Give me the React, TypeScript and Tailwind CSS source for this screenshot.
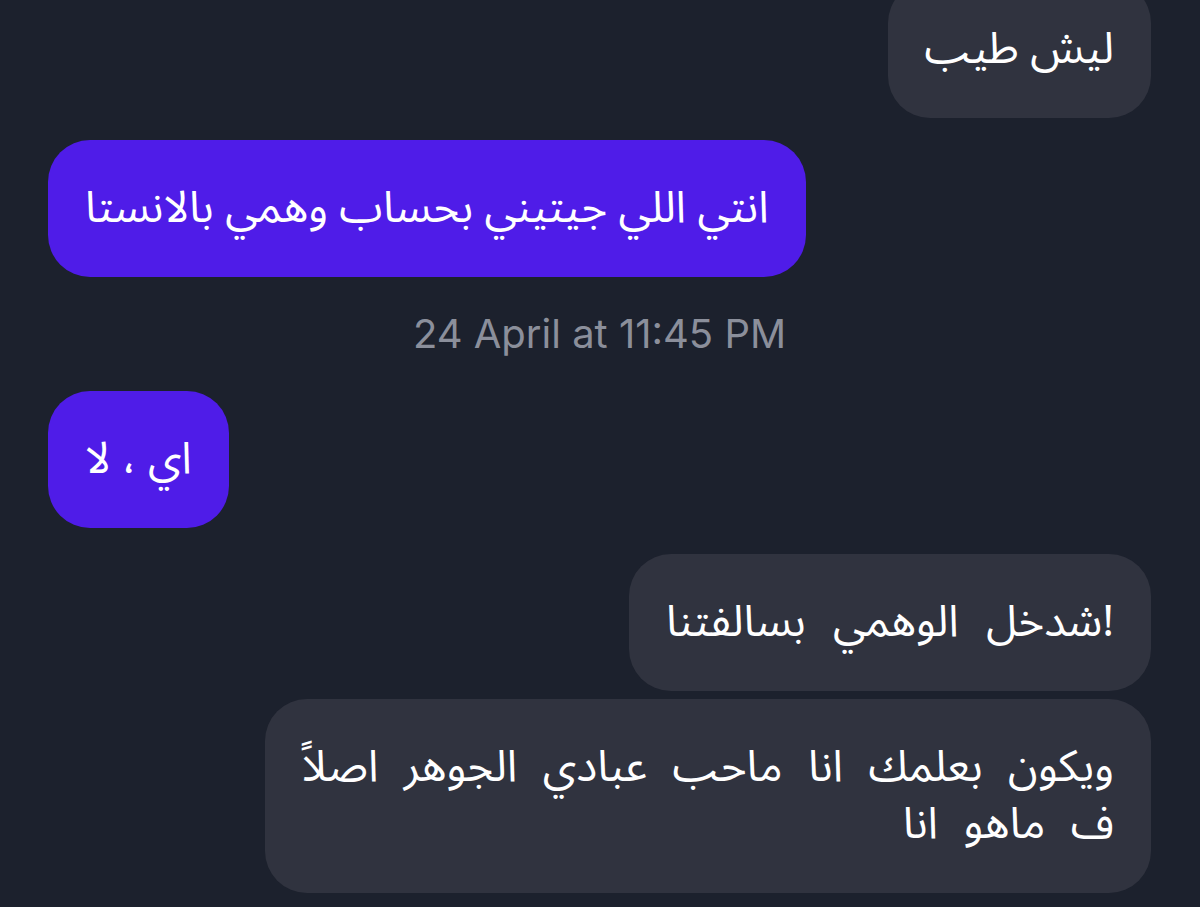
const arabic = "font-['Noto_Sans_Arabic','DejaVu_Sans',sans-serif]"

const gray = "bg-[#30333f]"
const purple = "bg-[#4f1ce8]"

function Bubble({ children, mine }: { children: React.ReactNode; mine?: boolean }) {
	return <div
		dir="rtl"
		className={`${mine ? gray + " self-end" : purple + " self-start"} ${arabic} rounded-[42px] px-[37px] py-[40px] text-[44px] leading-[57px] text-white`}
	>
		{children}
	</div>
}

export default function App() {
	return <div className="w-[1200px] h-[907px] overflow-hidden bg-[#1c212d]">
		<div className="flex flex-col px-[48px] pr-[49px] mt-[-19px]">
			<Bubble mine>ليش طيب</Bubble>
			<div className="h-[22px]" />
			<Bubble>انتي اللي جيتيني بحساب وهمي بالانستا</Bubble>
			<div className="py-[33px] text-center font-['Inter',sans-serif] text-[40px] leading-[48px] text-[#8b8f9b]">
				24 April at 11:45 PM
			</div>
			<Bubble>اي ، لا</Bubble>
			<div className="h-[26px]" />
			<Bubble mine><span className="[word-spacing:16px]">!شدخل الوهمي بسالفتنا</span></Bubble>
			<div className="h-[8px]" />
			<Bubble mine><span className="[word-spacing:14px]">ويكون بعلمك انا ماحب عبادي الجوهر اصلاً<br />ف ماهو انا</span></Bubble>
		</div>
	</div>
}
